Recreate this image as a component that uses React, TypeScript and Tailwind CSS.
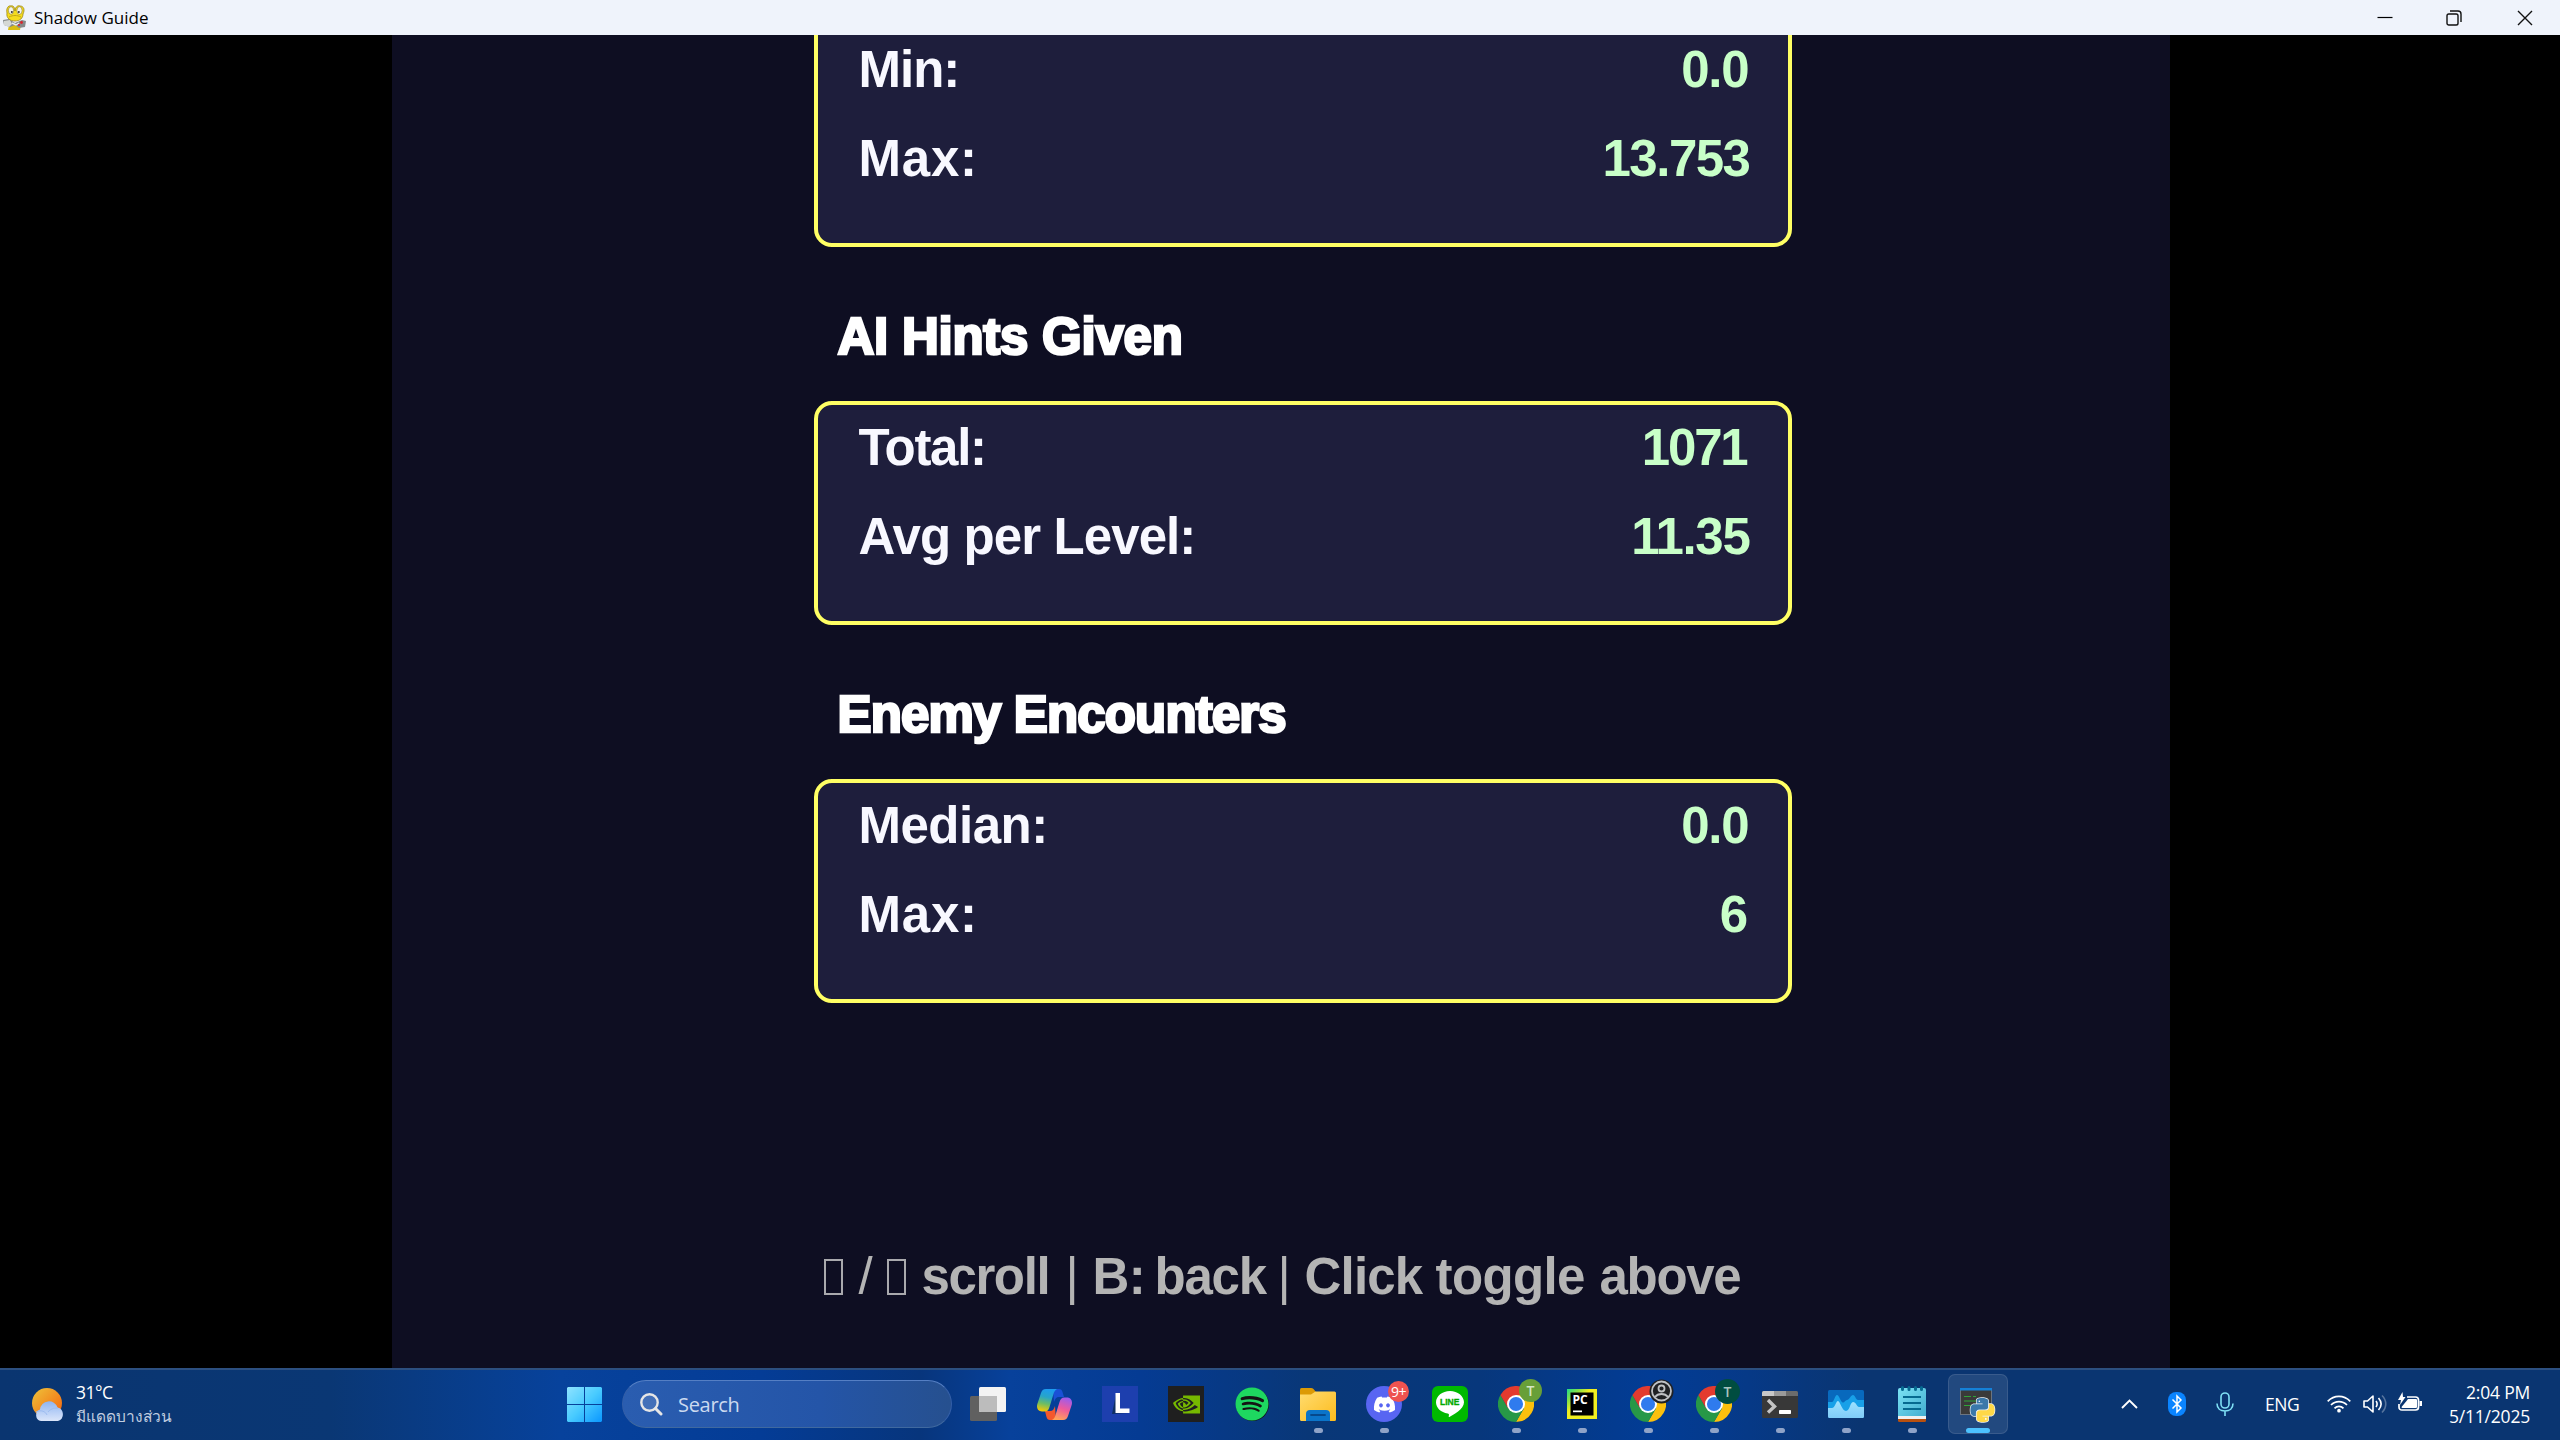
import type { ReactNode } from "react";
import { FaDiscord, FaSpotify } from "react-icons/fa";
import { SiNvidia } from "react-icons/si";

const GAME_FONT = "font-['Liberation_Sans',sans-serif] font-bold text-[51px]";
const UI_FONT = "font-['Open_Sans','Noto_Sans',sans-serif]";

type Row = { label: string; value: string; labelCls?: string; valueCls?: string };

function StatRow({ label, value, labelCls = "", valueCls = "" }: Row) {
  return (
    <div className="flex h-[88.7px] items-center justify-between leading-[88px]">
      <span className={`text-[#f8f8ff] ${labelCls}`}>{label}</span>
      <span className={`text-[#c8ffc8] ${valueCls}`}>{value}</span>
    </div>
  );
}

function StatBox({ rows, cls = "h-[224px]" }: { rows: Row[]; cls?: string }) {
  return (
    <div className={`w-[978px] rounded-[18px] border-[4.4px] border-[#ffff64] bg-[#1e1e3c] pr-[38px] pl-[41px] ${cls}`}>
      <div className="-mt-[1px]">
        {rows.map((r) => (
          <StatRow key={r.label} {...r} />
        ))}
      </div>
    </div>
  );
}

function Heading({ children, cls = "" }: { children: string; cls?: string }) {
  return (
    <div className="flex h-[154px] items-center pt-[26px] pl-[24px] leading-[60px]">
      <span className={`text-white [-webkit-text-stroke:2.600px_#fff] ${cls}`}>{children}</span>
    </div>
  );
}

function MissingGlyph() {
  return <span className="block h-[36px] w-[19px] border-2 border-[#a9a9ad]" />;
}

function TitleBar() {
  return (
    <div className={`flex h-[35px] items-center justify-between bg-[#eff3fb] text-black ${UI_FONT}`}>
      <div className="flex items-center">
        <svg width="24" height="26" viewBox="0 0 24 26" className="ml-[3px]">
          <path d="M6 20h12l-1 5H5z" fill="#d9bd12" />
          <path d="M0 15l6-1 6 4 7-3 4 1-1 6-6 1-4-3-5 2-6-2z" fill="#85898a" />
          <path d="M1 16l6-1 2 4-3 3-5-2z" fill="#d5d8d5" />
          <path d="M9 18l4 2 3-2" stroke="#e9ebe9" strokeWidth="1.500" fill="none" />
          <path d="M4 8c-1-4 1-8 4-7 3-1 4 3 4 5 0-3 2-6 5-5 4 0 5 4 3 8 0 4-3 7-8 7s-9-3-8-8z" fill="#f5dc1e" stroke="#9b8516" strokeWidth="0.8" />
          <ellipse cx="8" cy="5.500" rx="2.600" ry="3.800" fill="#f4f4ee" stroke="#8c7c25" strokeWidth="0.6" />
          <ellipse cx="16.500" cy="5.500" rx="2.600" ry="3.800" fill="#f4f4ee" stroke="#8c7c25" strokeWidth="0.6" />
          <circle cx="8.800" cy="7" r="1" fill="#333" />
          <circle cx="15.800" cy="7" r="1" fill="#333" />
          <path d="M6 12c4-2 8-2 12 0" stroke="#c2a615" fill="none" />
          <circle cx="18.500" cy="17.500" r="1.400" fill="#d9232c" />
          <circle cx="16" cy="20" r="1" fill="#d9232c" />
        </svg>
        <span className="ml-[7px] text-[17px] leading-[34px] tracking-[0px]">Shadow Guide</span>
      </div>
      <div className="flex items-center pr-[27px]">
        <svg width="16" height="16" viewBox="0 0 16 16" stroke="#000" strokeWidth="1.2" fill="none">
          <path d="M0.500 7.500h15" />
        </svg>
        <svg width="16" height="16" viewBox="0 0 16 16" stroke="#111" strokeWidth="1.4" fill="none" className="ml-[53px]">
          <rect x="1" y="4" width="11" height="11" rx="1.8" />
          <path d="M4 1h8a3 3 0 0 1 3 3v8" />
        </svg>
        <svg width="16" height="16" viewBox="0 0 16 16" stroke="#111" strokeWidth="1.4" fill="none" className="ml-[55px]">
          <path d="M1 1l14 14M15 1L1 15" />
        </svg>
      </div>
    </div>
  );
}

function Slot({ children, running, active }: { children: ReactNode; running?: boolean; active?: boolean }) {
  return (
    <div className="relative flex h-[70px] w-[66px] items-center justify-center">
      {active && <span className="absolute top-[4px] left-[3px] h-[60px] w-[60px] rounded-[7px] border border-white/10 bg-white/10" />}
      <span className="relative -mt-[2px] flex h-[36px] w-[36px] items-center justify-center">{children}</span>
      {running && <span className="absolute top-[58px] left-[29px] h-[5px] w-[9px] rounded-full bg-[#8fa3c8]" />}
      {active && <span className="absolute top-[58px] left-[21px] h-[5px] w-[24px] rounded-full bg-[#4cc2ff]" />}
    </div>
  );
}

function Chrome({ badge }: { badge: ReactNode }) {
  return (
    <>
      <svg width="36" height="36" viewBox="0 0 48 48">
        <path d="M24 24V12H44.8A24 24 0 0 1 24 48L34.400 30z" fill="#fcc00d" />
        <path d="M24 24L34.400 30L24 48A24 24 0 0 1 3.200 12L13.600 30z" fill="#279847" />
        <path d="M24 12H44.800A24 24 0 0 0 3.200 12L13.600 30z" fill="#e33b2e" />
        <circle cx="24" cy="24" r="12" fill="#fff" />
        <circle cx="24" cy="24" r="9.400" fill="#2f7bee" />
      </svg>
      {badge}
    </>
  );
}

function Taskbar() {
  return (
    <div
      className={`flex h-[72px] items-start border-t-2 border-[#2c4f80] bg-[linear-gradient(90deg,#0a3570_0px,#0a3774_330px,#07429c_560px,#043c96_760px,#07357c_920px,#07419b_1010px,#053b93_1140px,#093777_1310px,#07377c_1480px,#023c95_1650px,#053a8c_1720px,#0a3571_1860px,#0a3571_2560px)] text-white ${UI_FONT}`}
    >
      <div className="flex h-[70px] w-[567px] items-start pl-[32px]">
        <svg width="34" height="34" viewBox="0 0 34 34" className="mt-[18px]">
          <defs>
            <linearGradient id="sun" x1="0" y1="0" x2="1" y2="1">
              <stop offset="0" stopColor="#eec43a" />
              <stop offset="1" stopColor="#f5600d" />
            </linearGradient>
            <linearGradient id="cloud" x1="0" y1="0" x2="0" y2="1">
              <stop offset="0" stopColor="#8fb5f2" />
              <stop offset="1" stopColor="#dbe6fa" />
            </linearGradient>
          </defs>
          <circle cx="15" cy="15" r="15" fill="url(#sun)" />
          <path d="M9 33a6 6 0 0 1-1-11.500 9 9 0 0 1 17.500-2A7 7 0 0 1 26 33z" fill="url(#cloud)" />
          <path d="M4 24c5-3 10 0 11 3M16 24c3-4 8-4 10-4" stroke="#9dbcf0" fill="none" />
        </svg>
        <div className="mt-[10px] ml-[10px] flex flex-col">
          <span className="h-[24px] text-[17.500px] leading-[24px] tracking-[-0.5px]">31°C</span>
          <span className="h-[24px] text-[15.500px] leading-[24px] whitespace-nowrap text-[#c0cde0]">มีแดดบางส่วน</span>
        </div>
      </div>

      <svg width="35" height="35" viewBox="0 0 35 35" className="mt-[17px]">
        <defs>
          <linearGradient id="win" x1="0" y1="0" x2="1" y2="1">
            <stop offset="0" stopColor="#8fe3ff" />
            <stop offset="0.5" stopColor="#49cbff" />
            <stop offset="1" stopColor="#0a97ff" />
          </linearGradient>
        </defs>
        <path d="M1 0h16v17H0V1zM18 0h16l1 1v16H18zM0 18h17v17H1l-1-1zM18 18h17v16l-1 1H18z" fill="url(#win)" />
      </svg>

      <div className="mt-[10px] ml-[20px] flex h-[48px] w-[330px] items-center rounded-full border border-t-[#557fc4] border-r-[#345fa8] border-b-[#40699f] border-l-[#345fa8] bg-[linear-gradient(90deg,#2a5db0,#2455a8_60%,#26508f)] pl-[17px]">
        <svg width="23" height="23" viewBox="0 0 23 23" fill="none" stroke="#e6e6e6">
          <circle cx="9.500" cy="9.500" r="8.200" strokeWidth="2.400" fill="#ffffff20" />
          <path d="M15.500 15.500l5.500 5.500" strokeWidth="3" strokeLinecap="round" />
        </svg>
        <span className="mt-[1px] ml-[15px] text-[20px] leading-[46px] tracking-[-0.3px] text-[#ccdaf0]">Search</span>
      </div>

      <div className="ml-[3px] flex">
        <Slot>
          <svg width="36" height="34" viewBox="0 0 36 34">
            <rect x="0" y="9" width="27" height="25" rx="1.5" fill="#606060" />
            <rect x="9" y="0" width="27" height="25" rx="1.5" fill="#f3f3f3" />
            <path d="M9 9h18v16H10.500L9 23.500z" fill="#bcbcbc" />
          </svg>
        </Slot>
        <Slot>
          <svg width="35" height="31" viewBox="0 0 35 31">
            <defs>
              <linearGradient id="cpA" x1="0.500" y1="0" x2="0.300" y2="1">
                <stop offset="0" stopColor="#1d9bf0" />
                <stop offset="0.350" stopColor="#27a5c9" />
                <stop offset="0.650" stopColor="#6bbd66" />
                <stop offset="1" stopColor="#fbc800" />
              </linearGradient>
              <linearGradient id="cpB" x1="0.700" y1="0" x2="0.400" y2="1">
                <stop offset="0" stopColor="#9a5cf0" />
                <stop offset="0.500" stopColor="#ee5a9c" />
                <stop offset="1" stopColor="#ffa25a" />
              </linearGradient>
            </defs>
            <path d="M16 0h6c2 0 3 1 3.500 3l1.500 5h-5c-3 0-4 2-5 5z" fill="#1a50d6" />
            <path d="M19 31h-6c-2 0-3-1-3.500-3L8 22h5c3 0 4-2 5-5z" fill="#f4582c" />
            <path d="M9 0h11c-2 1-3 3-3.500 5l-4 13c-1 3-2 4.500-5 4.500H5C1 22.500-1 19 .5 14.500L4 4c1-2.500 2-4 5-4z" fill="url(#cpA)" />
            <path d="M26 31H15c2-1 3-3 3.500-5l4-13c1-3 2-4.500 5-4.500H30c4 0 6 3.500 4.500 8L31 27c-1 2.500-2 4-5 4z" fill="url(#cpB)" />
          </svg>
        </Slot>
        <Slot>
          <svg width="36" height="36" viewBox="0 0 36 36">
            <rect width="36" height="36" fill="#1d3fae" />
            <path d="M10 28l4-20 1 15 11 4z" fill="#0e2f63" />
            <path d="M13.500 7H18v15.500h9.500V27H13.500z" fill="#fff" />
          </svg>
        </Slot>
        <Slot>
          <span className="flex h-[36px] w-[36px] items-center justify-center bg-[#1f1f1f]">
            <SiNvidia size={27} color="#76b900" />
          </span>
        </Slot>
        <Slot>
          <span className="flex h-[33px] w-[33px] items-center justify-center rounded-full bg-[#141414]">
            <FaSpotify size={34} color="#1ed760" className="shrink-0" />
          </span>
        </Slot>
        <Slot running>
          <svg width="36" height="33" viewBox="0 0 36 33">
            <defs>
              <linearGradient id="fold" x1="0" y1="0" x2="1" y2="1">
                <stop offset="0" stopColor="#ffdc70" />
                <stop offset="1" stopColor="#fdbb1c" />
              </linearGradient>
            </defs>
            <path d="M0 1.500Q0 0 1.500 0H11q1.500 0 2.500 1l2 2.500V8H0z" fill="#dc9a05" />
            <path d="M0 6.500h11l4.500-3H34.500q1.500 0 1.500 1.500V31.500Q36 33 34.500 33H1.500Q0 33 0 31.500z" fill="url(#fold)" />
            <path d="M6 33v-7q0-4 4-4H26q4 0 4 4v7z" fill="#0b74c9" />
            <path d="M11 27h14" stroke="#06498c" strokeWidth="1.800" strokeLinecap="round" />
          </svg>
        </Slot>
        <Slot running>
          <span className="flex h-[36px] w-[36px] items-center justify-center rounded-full bg-[#5865f2]">
            <FaDiscord size={23} color="#fff" />
          </span>
          <span className="absolute -top-[5px] -right-[7px] flex h-[21px] w-[21px] items-center justify-center rounded-full bg-[#ee5350] text-[14px] leading-none tracking-[-0.5px] text-white">
            9+
          </span>
        </Slot>
        <Slot>
          <span className="relative flex h-[36px] w-[36px] items-center justify-center rounded-[6px] bg-[#00b900]">
            <svg width="28" height="26" viewBox="0 0 28 26">
              <path d="M14 0C6.300 0 0 5 0 11.300 0 17 5 21.600 11.700 22.500c1.600.3 1.300 1.200 1 3.300 0 .5.300.4.700.2C17 24 28 18.500 28 11.300 28 5 21.700 0 14 0z" fill="#fff" />
            </svg>
            <span className="absolute top-[12px] left-[8px] font-['Liberation_Sans',sans-serif] text-[8.500px] leading-[9px] font-bold text-[#00a800] [-webkit-text-stroke:0.3px_#00a800]">LINE</span>
          </span>
        </Slot>
        <Slot running>
          <Chrome badge={<span className="absolute -top-[7px] -right-[8px] flex h-[23px] w-[23px] items-center justify-center rounded-full bg-[#689f38] text-[14px] leading-none font-semibold text-[#d5e6c4]">T</span>} />
        </Slot>
        <Slot running>
          <svg width="30" height="30" viewBox="0 0 30 30">
            <defs>
              <linearGradient id="pc" x1="0" y1="0" x2="0.400" y2="0.400">
                <stop offset="0" stopColor="#1fdc8c" />
                <stop offset="0.500" stopColor="#7fe24a" />
                <stop offset="1" stopColor="#f0ee20" />
              </linearGradient>
            </defs>
            <rect width="30" height="30" fill="url(#pc)" />
            <rect x="3.500" y="3.500" width="23" height="23" fill="#000" />
            <rect x="6" y="21.500" width="9" height="1.700" fill="#fff" />
          </svg>
          <span className="absolute top-[8px] left-[8.500px] font-['Open_Sans',sans-serif] text-[12px] leading-[12px] font-bold">PC</span>
        </Slot>
        <Slot running>
          <Chrome
            badge={
              <svg width="25" height="25" viewBox="0 0 25 25" className="absolute -top-[7px] -right-[8px]">
                <circle cx="12.500" cy="12.500" r="12" fill="#202124" />
                <circle cx="12.500" cy="12" r="9.500" fill="none" stroke="#bfc1c4" strokeWidth="1.800" />
                <circle cx="12.500" cy="9.500" r="3" fill="none" stroke="#bfc1c4" strokeWidth="1.800" />
                <path d="M6 18c3-4 10-4 13 0" fill="none" stroke="#bfc1c4" strokeWidth="1.800" />
              </svg>
            }
          />
        </Slot>
        <Slot running>
          <Chrome badge={<span className="absolute -top-[7px] -right-[8px] flex h-[25px] w-[25px] items-center justify-center rounded-full bg-[#004d40] text-[14px] leading-none font-semibold text-[#a8c4bf]">T</span>} />
        </Slot>
        <Slot running>
          <svg width="36" height="27" viewBox="0 0 36 27">
            <rect width="36" height="27" rx="1.500" fill="#383838" />
            <path d="M0 5V1.500Q0 0 1.500 0H12v5z" fill="#c8c8c8" />
            <path d="M12 0h12v5H12z" fill="#9a9a9a" />
            <path d="M24 0h10.500Q36 0 36 1.500V5H24z" fill="#6c6c6c" />
            <path d="M6 9l6.500 6.500L6 21.500" stroke="#c4c4c4" strokeWidth="3.400" fill="none" />
            <rect x="17" y="19" width="12" height="4" rx="0.800" fill="#fff" />
          </svg>
        </Slot>
        <Slot running>
          <svg width="36" height="28" viewBox="0 0 36 28">
            <defs>
              <linearGradient id="mon" x1="0" y1="0" x2="0" y2="1">
                <stop offset="0" stopColor="#9fe2ff" />
                <stop offset="1" stopColor="#7fccf8" />
              </linearGradient>
            </defs>
            <rect width="36" height="28" rx="1.500" fill="#0869bd" />
            <path d="M0 12h4c2 0 3-7 5-7s3 5 5 7c2 2 3-2 5-2s4-5 6-5 3 5 5 5h6v12H0z" fill="#18a0e8" />
            <path d="M0 18h4c3 0 4-7 6-7s4 10 8 10 4-9 7-9 4 5 6 5h5v9.500Q36 28 34.500 28H1.500Q0 28 0 26.500z" fill="url(#mon)" />
          </svg>
        </Slot>
        <Slot running>
          <svg width="28" height="36" viewBox="0 0 28 36">
            <defs>
              <linearGradient id="np" x1="0" y1="0" x2="1" y2="1">
                <stop offset="0" stopColor="#7be3f4" />
                <stop offset="1" stopColor="#42add0" />
              </linearGradient>
            </defs>
            <path d="M0 30h28v4.500Q28 36 26.500 36h-25Q0 36 0 34.500z" fill="#b9500f" />
            <path d="M0 28h28v5H0z" fill="#f0f0f0" />
            <path d="M0 4q0-2 2-2h24q2 0 2 2v26H0z" fill="url(#np)" />
            <path d="M5 11h18M5 17h18M5 23h18" stroke="#066a90" strokeWidth="2" />
            <path d="M4.500 1.500v2M11 1.500v2M17.500 1.500v2M23.500 1.500v2" stroke="#066a90" strokeWidth="3" strokeLinecap="round" />
          </svg>
        </Slot>
        <Slot active>
          <svg width="36" height="36" viewBox="0 0 36 36" className="overflow-visible">
            <rect x="0" y="2" width="32" height="27" fill="#6b7480" />
            <rect x="1" y="4" width="30" height="24" fill="#3a3a3a" />
            <rect x="0" y="2" width="32" height="2.500" fill="#1581d8" />
            <path d="M4 10.500h7M13 10.500h3M4 15h13M4 19.500h7" stroke="#2fa336" strokeWidth="1.200" />
            <g transform="translate(10.500 12)" stroke="#eef2f5" strokeWidth="1.400" paintOrder="stroke">
              <path
                fill="#3a78aa"
                d="M14.250.18l.9.2.73.26.59.3.45.32.34.34.25.34.16.33.1.3.04.26.02.2-.01.13V8.500l-.05.63-.13.55-.21.46-.26.38-.3.31-.33.25-.35.19-.35.14-.33.1-.3.07-.26.04-.21.02H8.770l-.69.05-.59.14-.5.22-.41.27-.33.32-.27.35-.2.36-.15.37-.1.35-.07.32-.04.27-.02.21v3.060H3.170l-.21-.03-.28-.07-.32-.12-.35-.18-.36-.26-.36-.36-.35-.46-.32-.59-.28-.73-.21-.88-.14-1.050-.05-1.230.06-1.220.16-1.040.24-.87.32-.71.36-.57.4-.44.42-.33.42-.24.4-.16.36-.1.32-.05.24-.01h.16l.06.01h8.160v-.83H6.180l-.01-2.750-.02-.37.05-.34.11-.31.17-.28.25-.26.31-.23.38-.2.44-.18.51-.15.58-.12.64-.1.71-.06.77-.04.84-.02 1.270.05z"
              />
              <path
                fill="#ffd847"
                d="M21.040 6.110l.28.06.32.12.35.18.36.27.36.35.35.47.32.59.28.73.21.88.14 1.040.05 1.230-.06 1.230-.16 1.040-.24.86-.32.71-.36.57-.4.45-.42.33-.42.24-.4.16-.36.09-.32.05-.24.02-.16-.01h-8.220v.82h5.840l.01 2.760.02.36-.05.34-.11.31-.17.29-.25.25-.31.24-.38.2-.44.17-.51.15-.58.13-.64.09-.71.07-.77.04-.84.01-1.270-.04-1.070-.14-.9-.2-.73-.25-.59-.3-.45-.33-.34-.34-.25-.34-.16-.33-.1-.3-.04-.25-.02-.2.01-.13v-5.340l.05-.64.13-.54.21-.46.26-.38.3-.32.33-.24.35-.2.35-.14.33-.1.3-.06.26-.04.21-.02.13-.01h5.840l.69-.05.59-.14.5-.21.41-.28.33-.32.27-.35.2-.36.15-.36.1-.35.07-.32.04-.28.02-.21V6.070h2.090z"
              />
              <circle cx="8.800" cy="3.200" r="0.800" fill="#fff" stroke="none" />
              <circle cx="15.300" cy="20.900" r="0.900" fill="#fff" stroke="none" />
            </g>
          </svg>
        </Slot>
      </div>

      <div className="flex h-[70px] flex-1 items-center pr-[30px] pb-[2px]">
        <svg width="17" height="10" viewBox="0 0 17 10" className="ml-[110px]" fill="none" stroke="#fff" strokeWidth="1.900">
          <path d="M1 9l7.500-7.500L16 9" />
        </svg>
        <svg width="18" height="24" viewBox="0 0 18 24" className="ml-[30px]">
          <rect width="18" height="24" rx="8" fill="#0a84ff" />
          <path d="M4.500 7.500l8.500 8.500-4 4V4l4 4-8.500 8.500" fill="none" stroke="#fff" strokeWidth="1.500" />
        </svg>
        <svg width="18" height="24" viewBox="0 0 18 24" className="ml-[30px]" fill="none" stroke="#7fe0f5" strokeWidth="1.600">
          <rect x="5" y="1" width="8" height="15" rx="4" />
          <path d="M1 11.500c0 5 3.500 7.500 8 7.500s8-2.500 8-7.500M9 19v5" />
        </svg>
        <span className="ml-[31px] w-[35px] text-[17.500px] tracking-[-0.5px] whitespace-nowrap">ENG</span>
        <svg width="24" height="18" viewBox="0 0 24 18" className="ml-[27px]" fill="none" stroke="#fff" strokeWidth="1.700">
          <path d="M0.700 6.300c6.500-6.500 16-6.500 22.600 0M4 10c4.500-4.600 11.500-4.600 16 0M7.500 13.300c2.600-2.700 6.400-2.700 9 0" />
          <circle cx="12" cy="15.700" r="1" fill="#fff" />
        </svg>
        <svg width="24" height="20" viewBox="0 0 24 20" className="ml-[12px]" fill="none" stroke="#fff" strokeWidth="1.600">
          <path d="M1 7v6h3.500L10 18V2L4.500 7z" strokeLinejoin="round" />
          <path d="M13 7c1.500 2 1.500 4 0 6M15.500 4c3.500 4 3.500 8 0 12" />
          <path d="M19 1.500c5 5 5 12 0 17" stroke="#ffffff50" />
        </svg>
        <svg width="25" height="20" viewBox="0 0 25 20" className="-mt-[4px] ml-[11px]">
          <path d="M9 5h8.500q3 0 3 3v7q0 3-3 3H4q-3 0-3-3v-3" fill="none" stroke="#fff" strokeWidth="1.700" />
          <path d="M10 7h8q1 0 1 1v7q0 1-1 1H4.500q-1 0-1-1l5-6z" fill="#fff" />
          <path d="M21.500 9H24v5h-2.500z" fill="#fff" />
          <path d="M4.500 0L0 8h3l-1 5 5.500-8H5z" fill="#fff" />
        </svg>
        <div className="flex flex-1 flex-col items-end text-[17.500px] leading-[24px] tracking-[-0.200px] whitespace-nowrap">
          <span>2:04 PM</span>
          <span>5/11/2025</span>
        </div>
      </div>
    </div>
  );
}

export default function App() {
  return (
    <div className="flex h-[1440px] w-[2560px] flex-col overflow-hidden bg-black">
      <TitleBar />
      <main className={`ml-[392px] flex h-[1333px] w-[1778px] flex-col overflow-hidden bg-[#0e0e22] pl-[421.5px] whitespace-nowrap ${GAME_FONT}`}>
        <div className="-mt-[52px] shrink-0">
          <StatBox
            cls="h-[264px] pt-[40px]"
            rows={[
              { label: "Min:", value: "0.0", labelCls: "tracking-[-1px]", valueCls: "tracking-[-1.200px] pr-[1px]" },
              { label: "Max:", value: "13.753", labelCls: "tracking-[0.800px]", valueCls: "tracking-[-1.500px]" },
            ]}
          />
          <Heading cls="tracking-[-0.250px]">AI Hints Given</Heading>
          <StatBox
            rows={[
              { label: "Total:", value: "1071", labelCls: "tracking-[-1.300px]", valueCls: "tracking-[-2.200px] pr-[3px]" },
              { label: "Avg per Level:", value: "11.35", labelCls: "tracking-[-0.900px]", valueCls: "tracking-[-1.300px]" },
            ]}
          />
          <Heading cls="tracking-[-0.850px]">Enemy Encounters</Heading>
          <StatBox
            rows={[
              { label: "Median:", value: "0.0", labelCls: "tracking-[-0.500px]", valueCls: "tracking-[-1.200px] pr-[1px]" },
              { label: "Max:", value: "6", labelCls: "tracking-[0.800px]", valueCls: "pr-[1.500px]" },
            ]}
          />
        </div>
        <footer className="mt-[244px] flex h-[60px] shrink-0 items-center pl-[10px] leading-[60px] text-[#b4b4b4]">
          <MissingGlyph />
          <span className="ml-[16px] w-[28px] font-normal">/</span>
          <MissingGlyph />
          <span className="ml-[16px] w-[144px] tracking-[-1.400px]">scroll</span>
          <span className="w-[27px] font-normal">|</span>
          <span className="w-[62px] tracking-[-0.500px]">B:</span>
          <span className="w-[123px] tracking-[-1.200px]">back</span>
          <span className="w-[27px] font-normal">|</span>
          <span className="w-[131px] tracking-[-0.800px]">Click</span>
          <span className="w-[164px] tracking-[-0.600px]">toggle</span>
          <span className="tracking-[-1.300px]">above</span>
        </footer>
      </main>
      <Taskbar />
    </div>
  );
}
